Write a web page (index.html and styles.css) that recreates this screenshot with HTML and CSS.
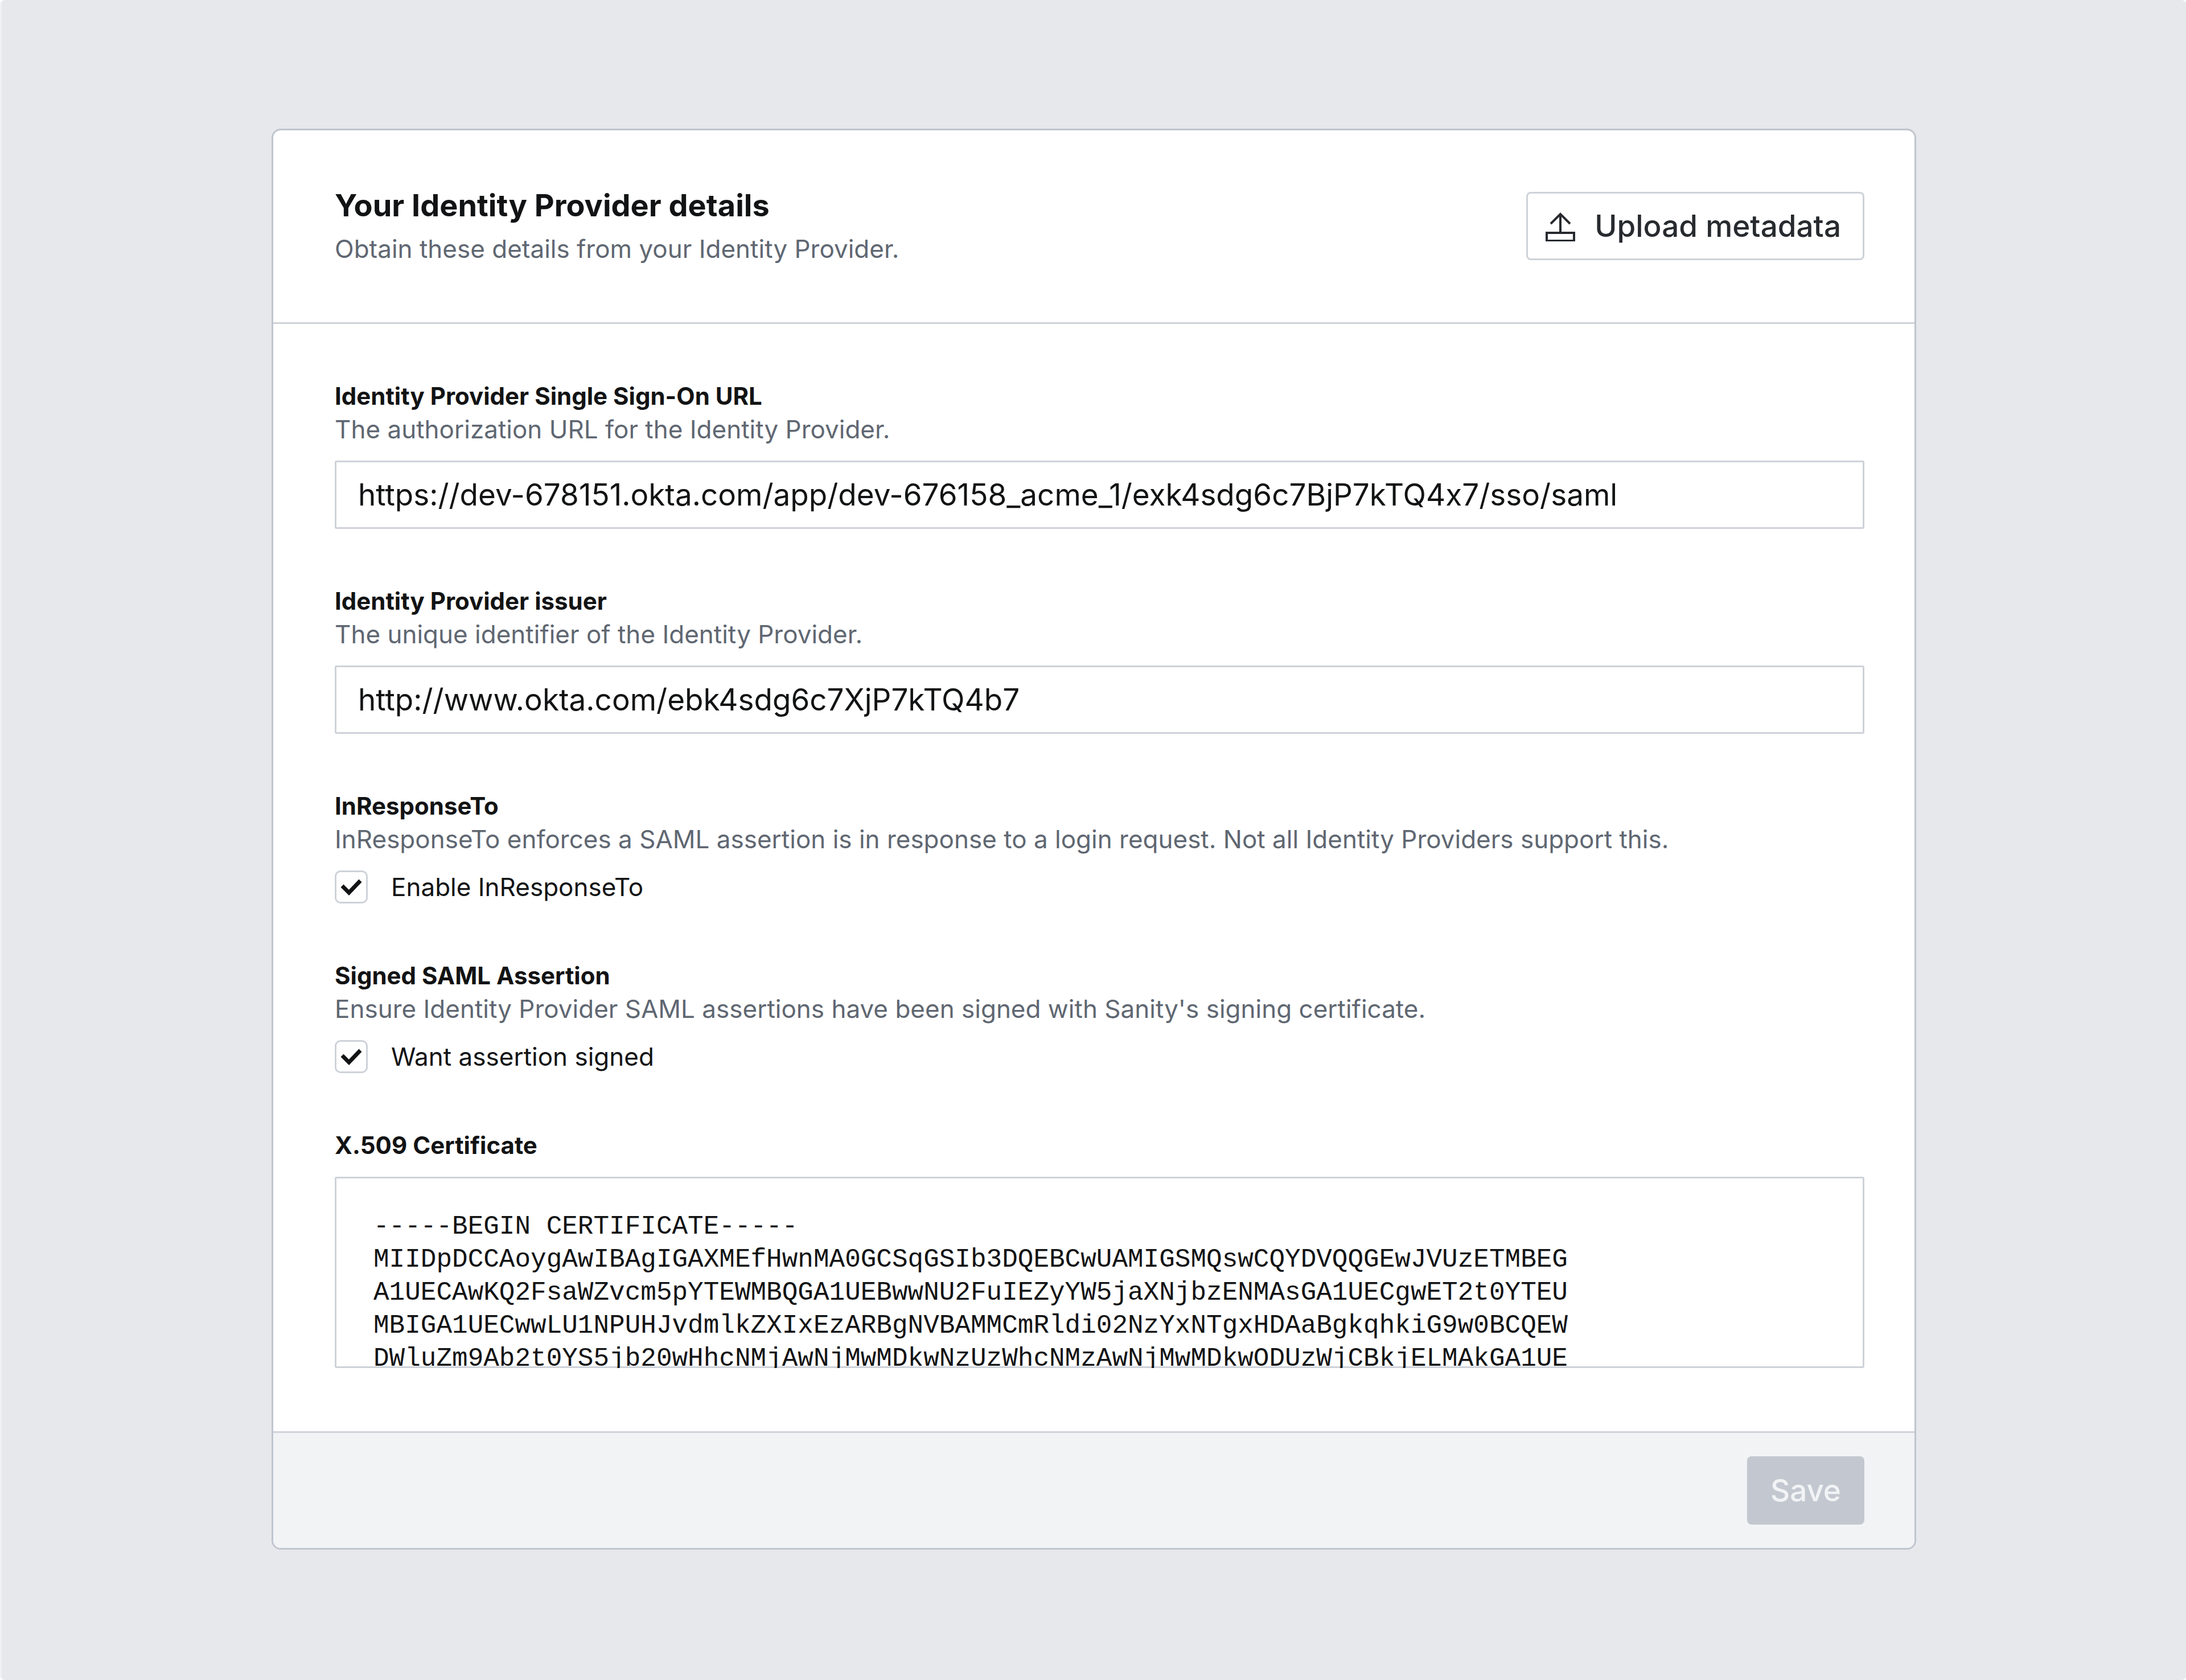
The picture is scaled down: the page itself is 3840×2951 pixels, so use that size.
FILE: index.html
```html
<!DOCTYPE html>
<html lang="en">

<head>
    <meta charset="UTF-8">
    <meta name="viewport" content="width=device-width, initial-scale=1.0">
    <title>Identity Provider details</title>
    <link rel="stylesheet" href="styles.css">
</head>

<body>
    <div class="page">
        <form class="card">
            <div class="card-header">
                <div class="heading">
                    <h1>Your Identity Provider details</h1>
                    <p class="description">Obtain these details from your Identity Provider.</p>
                </div>
                <button type="button" class="button upload">
                    <svg class="upload-icon" viewBox="0 0 54 54" fill="none" stroke="currentColor" stroke-width="4">
                        <path d="M27 38V7M10 23L27 6L44 23" />
                        <path d="M3 39H51V53H3Z" />
                    </svg>
                    Upload metadata
                </button>
            </div>
            <div class="card-body">
                <div class="field">
                    <label class="label" for="sso-url">Identity Provider Single Sign-On URL</label>
                    <p class="description">The authorization URL for the Identity Provider.</p>
                    <input class="control textbox" type="text" id="sso-url" value="https://dev-678151.okta.com/app/dev-676158_acme_1/exk4sdg6c7BjP7kTQ4x7/sso/saml">
                </div>
                <div class="field">
                    <label class="label" for="issuer">Identity Provider issuer</label>
                    <p class="description">The unique identifier of the Identity Provider.</p>
                    <input class="control textbox" type="text" id="issuer" value="http://www.okta.com/ebk4sdg6c7XjP7kTQ4b7">
                </div>
                <div class="field">
                    <h2 class="label">InResponseTo</h2>
                    <p class="description">InResponseTo enforces a SAML assertion is in response to a login request. Not all Identity Providers support this.</p>
                    <div class="control check-row">
                        <span class="check">
                            <input type="checkbox" id="in-response-to" checked>
                            <svg class="check-icon" viewBox="0 0 58 58" fill="none" stroke="currentColor" stroke-width="7">
                                <path d="M13 27L25 39L45 18" />
                            </svg>
                        </span>
                        <label for="in-response-to">Enable InResponseTo</label>
                    </div>
                </div>
                <div class="field">
                    <h2 class="label">Signed SAML Assertion</h2>
                    <p class="description">Ensure Identity Provider SAML assertions have been signed with Sanity's signing certificate.</p>
                    <div class="control check-row">
                        <span class="check">
                            <input type="checkbox" id="want-signed" checked>
                            <svg class="check-icon" viewBox="0 0 58 58" fill="none" stroke="currentColor" stroke-width="7">
                                <path d="M13 27L25 39L45 18" />
                            </svg>
                        </span>
                        <label for="want-signed">Want assertion signed</label>
                    </div>
                </div>
                <div class="field">
                    <label class="label" for="certificate">X.509 Certificate</label>
                    <textarea class="control certificate" id="certificate" spellcheck="false">-----BEGIN CERTIFICATE-----
MIIDpDCCAoygAwIBAgIGAXMEfHwnMA0GCSqGSIb3DQEBCwUAMIGSMQswCQYDVQQGEwJVUzETMBEG
A1UECAwKQ2FsaWZvcm5pYTEWMBQGA1UEBwwNU2FuIEZyYW5jaXNjbzENMAsGA1UECgwET2t0YTEU
MBIGA1UECwwLU1NPUHJvdmlkZXIxEzARBgNVBAMMCmRldi02NzYxNTgxHDAaBgkqhkiG9w0BCQEW
DWluZm9Ab2t0YS5jb20wHhcNMjAwNjMwMDkwNzUzWhcNMzAwNjMwMDkwODUzWjCBkjELMAkGA1UE</textarea>
                </div>
            </div>
            <div class="card-footer">
                <button type="submit" class="button save" disabled>Save</button>
            </div>
        </form>
    </div>
</body>

</html>
```

FILE: styles.css
```css
* {
    margin: 0;
    padding: 0;
    box-sizing: border-box;
}

body {
    background-color: #ffffff;
    color: #121314;
    font-family: Inter, "Liberation Sans", sans-serif;
}

.page {
    min-height: 100vh;
    padding: 226px 474px;
    border-left: 3px solid #eff0f2;
    border-radius: 8px;
    background-color: #e6e8ec;
}

.card {
    border: 3px solid #bfc5ce;
    border-radius: 16px;
    background-color: #ffffff;
    overflow: hidden;
}

.card-header {
    display: flex;
    justify-content: space-between;
    align-items: center;
    padding: 98px 88px 100px 108px;
    border-bottom: 3px solid #ced2d9;
}

.heading {
    display: flex;
    flex-direction: column;
    gap: 13px;
}

h1 {
    font-size: 54px;
    line-height: 68px;
    font-weight: 700;
}

.label {
    display: block;
    font-size: 42px;
    line-height: 58px;
    font-weight: 700;
}

.description {
    color: #5f6772;
    font-size: 44px;
    line-height: 58px;
}

.button {
    display: flex;
    align-items: center;
    height: 120px;
    border: none;
    border-radius: 8px;
    font-family: inherit;
    font-size: 53px;
    font-weight: 500;
}

.upload {
    gap: 33px;
    padding: 0 41px 0 33px;
    background-color: #ffffff;
    box-shadow: inset 0 0 0 3px #ced2d9;
    color: #272a2e;
}

.upload-icon {
    width: 54px;
    height: 54px;
}

.card-body {
    display: flex;
    flex-direction: column;
    gap: 98px;
    padding: 98px 88px 111px 108px;
}

.control {
    margin-top: 26px;
}

.textbox {
    display: block;
    width: 100%;
    height: 120px;
    padding: 0 41px;
    border: none;
    border-radius: 3px;
    box-shadow: inset 0 0 0 3px #ced2d9;
    color: inherit;
    font-family: inherit;
    font-size: 53px;
    font-variant-ligatures: no-contextual;
}

.check-row {
    display: flex;
    align-items: center;
    gap: 41px;
    font-size: 44px;
    line-height: 58px;
}

.check {
    display: grid;
    width: 58px;
    height: 58px;
}

.check input,
.check-icon {
    grid-area: 1 / 1;
    width: 58px;
    height: 58px;
}

.check input {
    appearance: none;
    border: 3px solid #ced2d9;
    border-radius: 10px;
}

.check-icon {
    visibility: hidden;
    pointer-events: none;
}

.check input:checked + .check-icon {
    visibility: visible;
}

/* the outline is an inset shadow so scrolled lines run over it */
.certificate {
    display: block;
    width: 100%;
    height: 336px;
    padding: 59px 68px 0;
    border: none;
    border-radius: 3px;
    box-shadow: inset 0 0 0 3px #ced2d9;
    color: inherit;
    font-family: "Liberation Mono", monospace;
    font-size: 46px;
    line-height: 58px;
    white-space: pre;
    resize: none;
    overflow: hidden;
}

.card-footer {
    display: flex;
    justify-content: flex-end;
    padding: 41px 88px;
    border-top: 3px solid #ced2d9;
    background-color: #f1f3f5;
}

.save {
    padding: 0 41px;
    background-color: #c3c8d0;
    color: #f1f3f5;
}
```
